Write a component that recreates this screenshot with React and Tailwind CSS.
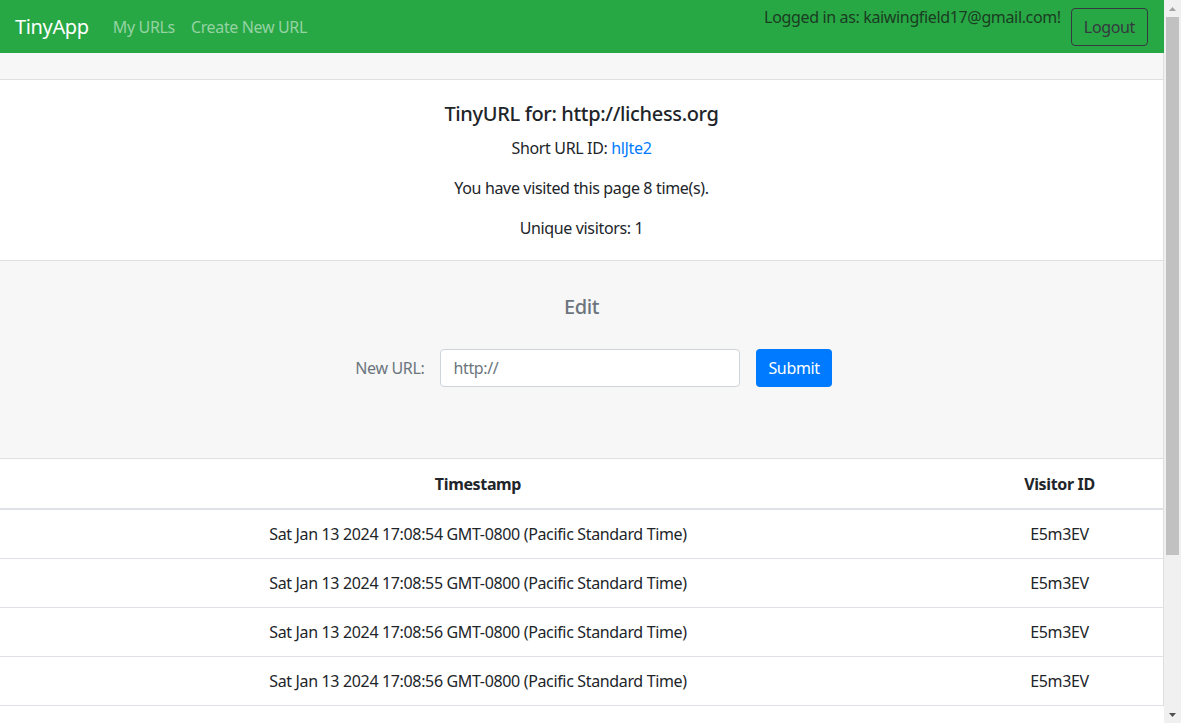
import React from 'react';

const visits = [
    { time: 'Sat Jan 13 2024 17:08:54 GMT-0800 (Pacific Standard Time)', id: 'E5m3EV' },
    { time: 'Sat Jan 13 2024 17:08:55 GMT-0800 (Pacific Standard Time)', id: 'E5m3EV' },
    { time: 'Sat Jan 13 2024 17:08:56 GMT-0800 (Pacific Standard Time)', id: 'E5m3EV' },
    { time: 'Sat Jan 13 2024 17:08:56 GMT-0800 (Pacific Standard Time)', id: 'E5m3EV' },
];

function Scrollbar() {
    return (
        <div className="w-[17px] h-full bg-[#f0f0f0] flex flex-col items-center">
            <div className="h-[17px] flex items-center justify-center">
                <svg width="7" height="4" viewBox="0 0 7 4"><path d="M0 4 L3.5 0 L7 4 Z" fill="#a3a3a3" /></svg>
            </div>
            <div className="w-[13px] h-[538px] bg-[#c1c1c1]" />
            <div className="flex-1" />
            <div className="h-[17px] flex items-center justify-center">
                <svg width="7" height="4" viewBox="0 0 7 4"><path d="M0 0 L7 0 L3.5 4 Z" fill="#505050" /></svg>
            </div>
        </div>
    );
}

export default function App() {
    return (
        <div className="w-[1181px] h-[723px] overflow-hidden flex bg-white text-[#212529] font-['Noto_Sans',sans-serif] tracking-[-0.35px]">
            <div className="w-[1164px] h-full overflow-hidden">
                <nav className="h-[53px] bg-[#28a745] flex items-center justify-between pl-[15px] pr-4">
                    <div className="flex items-center">
                        <span className="text-white text-[20px] mr-[24px]">TinyApp</span>
                        <a className="text-[#94d3a2] text-[16px] mr-[16px]">My URLs</a>
                        <a className="text-[#94d3a2] text-[16px]">Create New URL</a>
                    </div>
                    <div className="flex items-start h-[38px]">
                        <span className="text-[#1a3d22] text-[16px] leading-[24px] -mt-[3px] mr-[10px]">Logged in as: kaiwingfield17@gmail.com!</span>
                        <button className="h-[38px] px-[12px] border border-[#343a40] rounded text-[#343a40] text-[16px]">Logout</button>
                    </div>
                </nav>
                <div className="border-r border-[#dfdfdf]">
                    <div className="h-[27px] bg-[#f7f7f7] border-b border-[#dfdfdf]" />
                    <div className="text-center pt-[22px] pb-[20px] border-b border-[#dfdfdf]">
                        <h5 className="text-[20px] font-medium leading-[24px] mb-[10px]">TinyURL for: http://lichess.org</h5>
                        <p className="leading-[24px] mb-[16px]">Short URL ID: <a className="text-[#007bff]">hlJte2</a></p>
                        <p className="leading-[24px] mb-[16px]">You have visited this page 8 time(s).</p>
                        <p className="leading-[24px]">Unique visitors: 1</p>
                    </div>
                    <div className="h-[198px] bg-[#f7f7f7] border-b border-[#dfdfdf] pt-[34px] text-center">
                        <h3 className="text-[20px] font-medium leading-[24px] text-[#6c757d] mb-[30px]">Edit</h3>
                        <div className="flex items-center justify-center">
                            <label className="text-[#6c757d] mr-[16px] ml-[24px]">New URL:</label>
                            <div className="w-[300px] h-[38px] bg-white border border-[#ced4da] rounded flex items-center px-[12px] text-[#6c757d]">http://</div>
                            <button className="ml-[16px] h-[38px] px-[12px] rounded bg-[#007bff] text-white">Submit</button>
                        </div>
                    </div>
                    <table className="w-full border-collapse">
                        <thead>
                            <tr className="h-[50px] border-b-2 border-[#dee2e6]">
                                <th className="w-[956px] font-bold text-center">Timestamp</th>
                                <th className="font-bold text-center">Visitor ID</th>
                            </tr>
                        </thead>
                        <tbody>
                            {visits.map((v, i) => (
                                <tr key={i} className="h-[49px] border-b border-[#dee2e6]">
                                    <td className="text-center">{v.time}</td>
                                    <td className="text-center">{v.id}</td>
                                </tr>
                            ))}
                        </tbody>
                    </table>
                </div>
            </div>
            <Scrollbar />
        </div>
    );
}
